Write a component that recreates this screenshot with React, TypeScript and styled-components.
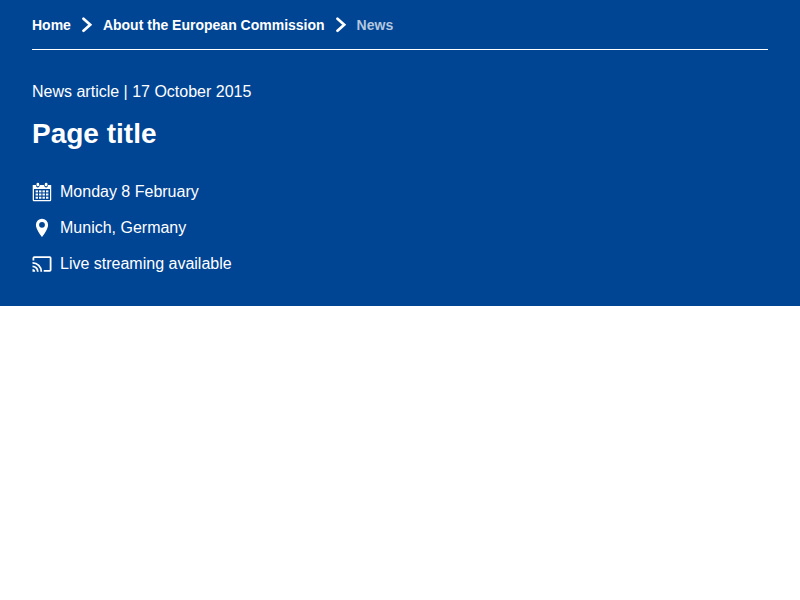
import React from "react";
import styled, { createGlobalStyle } from "styled-components";

const Global = createGlobalStyle`
  body { margin: 0; background: #fff; font-family: "Liberation Sans", Arial, sans-serif; }
`;
const Header = styled.header`
  background: #004494;
  color: #fff;
  padding: 0 32px;
  height: 306px;
  box-sizing: border-box;
`;
const Breadcrumb = styled.nav`
  display: flex;
  align-items: center;
  height: 49px;
  border-bottom: 1px solid #fff;
  font-size: 14px;
  line-height: 20px;
  font-weight: 700;
`;
const Crumb = styled.span<{ $current?: boolean }>`
  color: ${(p) => (p.$current ? "#b3c7df" : "#fff")};
`;
const Chevron = styled.svg`
  width: 16px;
  height: 16px;
  margin: 0 8px;
  fill: none;
  stroke: currentColor;
  stroke-width: 2.7;
  stroke-linecap: round;
`;
const Meta = styled.div`
  margin-top: 30px;
  font-size: 16px;
  line-height: 24px;
`;
const Title = styled.h1`
  margin: 14px 0 0;
  font-size: 28px;
  line-height: 32px;
  font-weight: 700;
`;
const Infos = styled.ul`
  list-style: none;
  margin: 30px 0 0;
  padding: 0;
  display: grid;
  gap: 12px;
`;
const Info = styled.li`
  display: flex;
  align-items: center;
  gap: 8px;
  font-size: 16px;
  line-height: 24px;
`;
const Icon = styled.svg`
  width: 20px;
  height: 20px;
  fill: currentColor;
`;

const Separator = () => (
  <Chevron viewBox="0 0 16 16" aria-hidden="true">
    <path d="M4.500 1.700 11.200 7.700 4.500 13.700" />
  </Chevron>
);
const columns = [3.6, 7, 10.500, 14];
const rows = [8.400, 11.500, 14.700];

export default function App() {
  return (
    <>
      <Global />
      <Header>
        <Breadcrumb>
          <Crumb>Home</Crumb>
          <Separator />
          <Crumb>About the European Commission</Crumb>
          <Separator />
          <Crumb $current>News</Crumb>
        </Breadcrumb>
        <Meta>News article | 17 October 2015</Meta>
        <Title>Page title</Title>
        <Infos>
          <Info>
            <Icon viewBox="0 0 20 20">
              <path fillRule="evenodd" d="M.7 3h3.200c0 1.500.7 2.400 1.900 2.400S7.700 4.500 7.700 3h4.500c0 1.500.7 2.400 1.900 2.400S16 4.500 16 3h3.200v15a1.200 1.200 0 0 1-1.200 1.200H1.900A1.200 1.200 0 0 1 .7 18zM2 7v11h16V7z" />
              <rect x="4.500" y=".7" width="2.700" height="3.500" rx="1.300" />
              <rect x="12.800" y=".7" width="2.700" height="3.500" rx="1.300" />
              {rows.map((y) => columns.map((x) => <rect key={`${x}-${y}`} x={x} y={y} width="2.400" height="2" />))}
            </Icon>
            Monday 8 February
          </Info>
          <Info>
            <Icon viewBox="0 0 20 20">
              <path fillRule="evenodd" d="M10 .8a6.100 6.100 0 0 0-6.100 6.100C3.900 11.400 10 19 10 19s6.100-7.600 6.100-12.100A6.100 6.100 0 0 0 10 .8zm0 3.100a2.900 2.900 0 1 1 0 5.800 2.900 2.900 0 0 1 0-5.800z" />
            </Icon>
            Munich, Germany
          </Info>
          <Info>
            <Icon viewBox="0 0 20 20">
              <path d="M17.700 2.300H2.300A1.800 1.800 0 0 0 .5 4.100v2.400h1.800V4.100h15.400v11.800h-6v1.800h6a1.800 1.800 0 0 0 1.800-1.800V4.100a1.800 1.800 0 0 0-1.800-1.800zM.5 15v2.700h2.700A2.700 2.700 0 0 0 .5 15zm0-3.500v1.800a4.400 4.400 0 0 1 4.400 4.400h1.800a6.200 6.200 0 0 0-6.200-6.200zm0-3.500v1.800a7.900 7.900 0 0 1 7.900 7.900h1.800A9.700 9.700 0 0 0 .5 8z" />
            </Icon>
            Live streaming available
          </Info>
        </Infos>
      </Header>
    </>
  );
}
